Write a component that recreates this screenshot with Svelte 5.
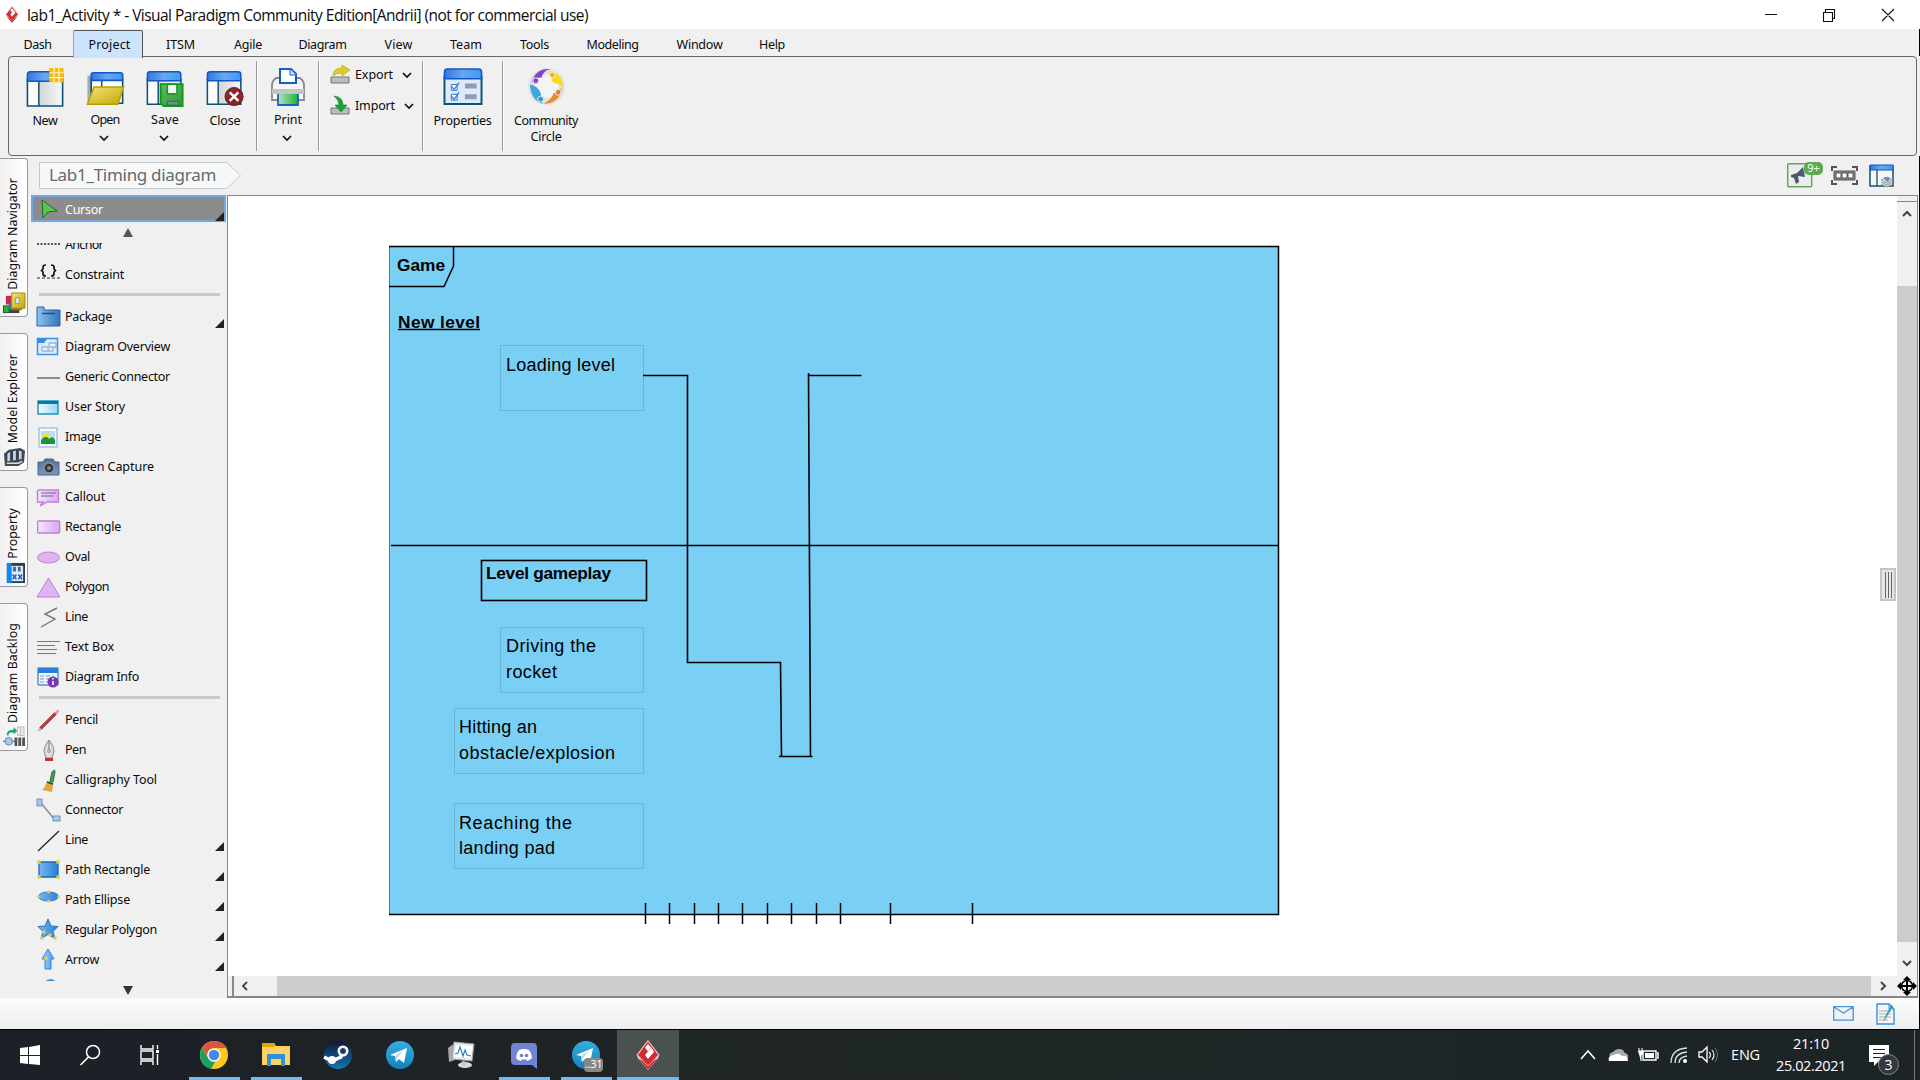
<script>
  // Spreads or tightens the letters so that a label takes the width given in pixels.
  function fit(node, width) {
    const natural = node.getBoundingClientRect().width;
    const count = node.textContent.length;
    if (width && natural) node.style.letterSpacing = (width - natural) / count + 'px';
  }

  const menus = [
    ['Dash', 75, 28], ['Project', 70, 42], ['ITSM', 71, 29], ['Agile', 64, 28],
    ['Diagram', 85, 48], ['View', 67, 28], ['Team', 68, 32], ['Tools', 69, 29],
    ['Modeling', 87, 52], ['Window', 87, 46], ['Help', 58, 26]
  ];

  const win = '<path d="M1 10v28h37V10z" fill="url(#pane)" stroke="#0d5273" stroke-width="1.700"/><path d="M13 11v27" stroke="#0d5273" stroke-width="1.6"/><path d="M1 12V5q0-3 3-3h31q3 0 3 3v7z" fill="url(#bar)" stroke="#1257c4" stroke-width="1.6"/>';

  const art = {
    new: win + '<path d="M24-2h15v15H24z" fill="#f8b90d"/><path d="M24 3h15M24 8h15M29-2v15M34-2v15" stroke="#fff3c4" stroke-width="1.3"/>',
    open: '<path d="M1 6h5v28H1z" fill="#aaa"/><path d="M5 9h33v26H5z" fill="#fff" stroke="#0d5273" stroke-width="1.700"/><path d="M16 10v12" stroke="#0d5273" stroke-width="1.6"/><path d="M5 11V5q0-2 2-2h29q2 0 2 2v6z" fill="url(#bar)" stroke="#1257c4" stroke-width="1.6"/><path d="M8 18h31l-6 18H1z" fill="url(#gold)" stroke="#b3a100" stroke-width="1.6"/>',
    save: '<g transform="scale(.95)">' + win + '</g><path d="M15 15h23v23H18l-3-3z" fill="url(#green)" stroke="#129a1c" stroke-width="2"/><path d="M22 15h10v10H22z" fill="#f0f7f0" stroke="#129a1c" stroke-width="1.5"/><path d="M22 33h12v4H22z" fill="#6a8d9d" stroke="#28752c"/>',
    close: '<g transform="scale(.95)">' + win + '</g><circle cx="29" cy="28" r="9.5" fill="#8a252a" stroke="#5c1b1f"/><path d="m24.500 23.500 9 9m0-9-9 9" stroke="#fff" stroke-width="2.600"/>',
    print: '<path d="M6 10h24q4 3 4 7v15H2V17q0-4 4-7z" fill="url(#metal)" stroke="#888" stroke-width="1.8"/><path d="M2 21h32v5H2z" fill="#c4c4c4"/><path d="M10 15V1h11l5 5v9z" fill="#fff" stroke="#155bd0" stroke-width="2"/><path d="M20 1v6h6" fill="#cbe3ff" stroke="#155bd0"/><path d="M8 26h20v11H8z" fill="url(#print)"/><path d="M8 26v11h20V26" fill="none" stroke="#1c5fc8" stroke-width="1.8"/>',
    properties: '<path d="M1 10v28h38V10z" fill="#dceaf9" stroke="#0d5273" stroke-width="2"/><path d="M1 12V5q0-3 3-3h32q3 0 3 3v7z" fill="url(#bar)" stroke="#1257c4" stroke-width="1.6"/><path d="M8 18h6v6H8zM8 28h6v6H8z" fill="#fff" stroke="#3d70bf"/><path d="m8 20 3 3 5-7M8 30l3 3 5-7" fill="none" stroke="#3d83cf" stroke-width="1.5"/><path d="M22 17h12v5H22zM22 28h12v5H22z" fill="#919bb4"/>',
    circle: '<circle cx="20" cy="20" r="19" fill="#e2e2e2"/><circle cx="20" cy="20" r="12" fill="#f4f4f4"/><path d="M5 15Q9 1 24 2q-8 2-9 9-5-1-7 6z" fill="#8045c8"/><path d="M23 4q13 2 14 17-4-5-8-4-5-2-3-8z" fill="#f8db13"/><path d="M36 21q-2 16-19 17 9-5 10-11 5 0 9-6z" fill="#ed8c25"/><path d="M3 18q8 1 11 9l2 11Q4 34 3 18z" fill="#3ca8df"/><g stroke="#f2f2f2"><circle cx="9" cy="14" r="3" fill="#8045c8"/><circle cx="26" cy="8" r="3" fill="#f0b719"/><circle cx="32" cy="26" r="3" fill="#df7f2c"/><circle cx="14" cy="33" r="3" fill="#239cdf"/></g>',
    export: '<path d="M1 12h18v6H1z" fill="#bbb" stroke="#777"/><path d="M3 11q0-8 9-8V0l8 5-8 6V8q-6 0-9 3z" fill="#dfca28" stroke="#aea018" stroke-width=".6"/>',
    import: '<path d="M1 12h18v6H1z" fill="#bbb" stroke="#777"/><path d="M4 0q9 1 9 9h4l-6 7-6-7h4Q9 4 4 0z" fill="#18a431" stroke="#11832a" stroke-width=".6"/>',

    cursor: '<path d="m5 2 15 11-9 1-5 6z" fill="#55c94f" stroke="#2b5e31"/>',
    anchor: '<path d="M0 10h23" stroke="#222" stroke-width="1.4" stroke-dasharray="2 1.500"/>',
    constraint: '<path d="M9 1q-3 0-3 2v2L4.500 6.500 6 8v2q0 2 3 2M14 1q3 0 3 2v2l1.500 1.500L17 8v2q0 2-3 2" fill="none" stroke="#111" stroke-width="1.700"/><path d="M0 14h23" stroke="#222" stroke-dasharray="3 2"/>',
    package: '<path d="M0 3V1h7v3h16v16H0z" fill="url(#blue)" stroke="#2862aa"/><path d="M5 7.500h13" stroke="#244a78" stroke-width="1.400"/>',
    overview: '<path d="M.5 2.500h20v16H.5z" fill="#dcebfa" stroke="#3693e9" stroke-width="1.500"/><path d="M1 3h9L7 7H1z" fill="#2b91f0"/><path d="M12 7h7v4h-7zM5 11h6v4H5zM11 15h5v-4" fill="#eef4fc" stroke="#7ba0c8"/>',
    generic: '<path d="M0 12h23" stroke="#747474" stroke-width="1.600"/>',
    story: '<path d="M1 5h20v13H1z" fill="url(#sky)" stroke="#1792ba" stroke-width="1.400"/><path d="M1 5h20v3H1z" fill="#087c9c"/>',
    image: '<path d="M2 2h18v19H2z" fill="#f4faff" stroke="#84abd2"/><path d="M4 5h14v13H4z" fill="#bddcf8"/><circle cx="9" cy="10" r="3" fill="#f5e90b"/><path d="M4 18v-4q5-6 8-1 4-4 6 1v4z" fill="#219232"/>',
    camera: '<path d="M1 6h5l2-3h8l2 3h4v13H1z" fill="url(#steel)" stroke="#496484"/><circle cx="12" cy="12" r="5" fill="#333" stroke="#8790a0" stroke-width="1.500"/><circle cx="12" cy="12" r="2" fill="#888"/>',
    callout: '<path d="M1.500 4h20v12H10l-7 4 3-4H.5V5z" fill="url(#pink)" stroke="#c67bdb" stroke-width="1.400"/><path d="M4 7h15M4 10h12" stroke="#74697c"/>',
    rect: '<rect x=".7" y="5" width="22" height="12" rx="1" fill="url(#pink)" stroke="#c67bdb" stroke-width="1.300"/>',
    oval: '<ellipse cx="11.500" cy="11.500" rx="11" ry="5.500" fill="#dfb4ee" stroke="#c67bdb"/>',
    polygon: '<path d="M11.500 2 23 21H0z" fill="#dcb6f4" stroke="#c67bdb"/>',
    zig: '<path d="M20 2 8 8l10 5-14 8" fill="none" stroke="#777" stroke-width="1.400"/>',
    textbox: '<path d="M0 5.500h23M0 9.500h18M0 13.500h20M0 17.500h19" stroke="#777"/>',
    info: '<path d="M1 2h20v17H1z" fill="#eef6ff" stroke="#245e9d"/><path d="M1 2h20v5H1z" fill="#2580de"/><path d="M3 10h14M3 13h14M3 16h12" stroke="#7b96b8" stroke-dasharray="4 2"/><circle cx="16" cy="16" r="5.500" fill="#7838b5"/><path d="M16 15v4M16 12v1.500" stroke="#fff" stroke-width="1.600"/>',
    pencil: '<path d="m2.500 18.500 15-15 2 2-15 15z" fill="#c03a3d" stroke="#92393c" stroke-width=".6"/><path d="m17.500 3.500 3-3 2 2-3 3z" fill="#ea9a9a"/><path d="m1 22 1.500-3.500 2 2z" fill="#e7c99a" stroke="#a98" stroke-width=".5"/>',
    pen: '<path d="M12 1Q7 7 7 12l2 7h6l2-7q0-5-5-11z" fill="#ddd" stroke="#888"/><path d="M12 2v10" stroke="#777"/><circle cx="12" cy="12" r="1.300" fill="#fff" stroke="#888"/><path d="M8 19h8v3H8z" fill="#bc353e"/>',
    brush: '<path d="m13 12 2-9q3-4 3 0l-2 10z" fill="#4b9b59" stroke="#28723a"/><path d="m9 14 7 2-1 7-10-2q3-2 4-7z" fill="#e6a439"/><path d="m10 13 6 2" stroke="#176126" stroke-width="2"/>',
    connector: '<path d="m4 4 14 17" stroke="#888" stroke-width="1.400"/><path d="M0 0h5v7H0zM16 17h7v5h-7z" fill="#a9c8ee" stroke="#6f8fb4"/>',
    line: '<path d="M1 22 22 2" stroke="#222" stroke-width="1.300"/>',
    prect: '<path d="M2 3h19v15H2z" fill="url(#bright)" stroke="#1769bb" stroke-width="1.300"/><g fill="#e0cd4c"><circle cx="2" cy="3" r="1.900"/><circle cx="21" cy="3" r="1.900"/><circle cx="2" cy="18" r="1.900"/><circle cx="21" cy="18" r="1.900"/></g>',
    pellipse: '<ellipse cx="11.500" cy="7.500" rx="10" ry="4.500" fill="url(#bright)" stroke="#3a79ad"/><g fill="#e0cd4c"><circle cx="1.500" cy="7.500" r="1.500"/><circle cx="21.500" cy="7.500" r="1.500"/><circle cx="11.500" cy="3" r="1.500"/><circle cx="11.500" cy="12" r="1.500"/></g>',
    star: '<path d="m11 0 3 7 7 .5-5 5 2 7-7-4-7 4 2-7-5-5 7-.5z" fill="url(#bright)" stroke="#2878c0"/><g fill="#e0cd4c"><circle cx="7" cy="13" r="1.800"/><circle cx="5" cy="19" r="1.800"/><circle cx="13" cy="16" r="1.800"/><circle cx="18" cy="19" r="1.800"/></g>',
    arrow: '<path d="m11 0 6 10h-3v10H8V10H5z" fill="url(#sky2)" stroke="#2588e0"/><circle cx="9" cy="9.500" r="2" fill="#e0cd4c"/>',
    hidden: '<ellipse cx="13.500" cy="7.500" rx="7" ry="7.500" fill="#3a91df"/>',

    vp: '<path d="m12 0 11.500 15-2 4L12 30 2.500 19l-2-4z" fill="#f3d5d5"/><path d="m2.500 18.500 9.500 11 9.500-11-9.500 5z" fill="#c8252d"/><path d="m12 1 10.500 14L12 26 1.500 15z" fill="#d2292f" stroke="#f6cccc" stroke-width=".8"/><path d="M9 7.500 12 4l3 3.500-3 4zM12 11.500l3.500-4L18 12l-6 7-3-4z" fill="#fff"/>',
    start: '<path d="m0 3 8-1v8H0zM9 2l11-2v10H9zM0 11h8v8l-8-1zM9 11h11v9L9 19z" fill="#fff"/>',
    search: '<circle cx="13" cy="7" r="6.500" fill="none" stroke="#fff" stroke-width="1.500"/><path d="m8.500 12-8 8" stroke="#fff" stroke-width="1.600"/>',
    tasks: '<path d="M1 0v4h12V0M1 20v-4h12v4M1 6h12v8H1zM17.500 0v4M17.500 9v11" fill="none" stroke="#fff" stroke-width="1.400"/><path d="M16 5h3v3h-3z" fill="#fff"/>',
    chrome: '<circle cx="14" cy="14" r="14" fill="#fdc91c"/><path d="M2 7Q7 0 14 0q9 0 13 7H14q-6 0-7 7z" fill="#de5347"/><path d="M2 7 9 18q2 3 6 3l-4 7Q0 25 0 14q0-4 2-7z" fill="#1ba260"/><circle cx="14" cy="14" r="6.600" fill="#fff"/><circle cx="14" cy="14" r="5.300" fill="#4688f1"/>',
    folder: '<path d="M0 2h12l2 3h14v19H0z" fill="#fdd262"/><path d="M0 2h11l2 3-2 1H0z" fill="#e6a100"/><path d="M5 25V13h18v12h-4v-7H9v7z" fill="#2f91da"/>',
    steam: '<circle cx="14" cy="14" r="14" fill="url(#steam)"/><path d="m0 16 8 4 9-4 2-7" fill="none" stroke="#fff" stroke-width="3.500"/><circle cx="8" cy="19" r="4" fill="#fff"/><circle cx="19" cy="10" r="5.500" fill="#fff"/><circle cx="19" cy="10" r="3.500" fill="#123a6a" stroke="#fff"/>',
    telegram: '<circle cx="14" cy="14" r="14" fill="url(#tele)"/><path d="m4 14 17-7-3 15-5-4-3 3-1-6z" fill="#fff"/><path d="m9 15 9-6-7 8-1 4z" fill="#b8d6e8"/>',
    monitor: '<path d="m0 7 7-5v17l-6 2z" fill="#aaa"/><path d="m6 1 20 2-2 17-20-2z" fill="#e6e9eb" stroke="#9b9fa2"/><path d="m8 4 16 1-1 12-17-1z" fill="#fff"/><path d="m7 13 3-1 2-6 3 9 2-6 2 5 4 1" fill="none" stroke="#2786b3" stroke-width="1.200"/><ellipse cx="17" cy="24" rx="7" ry="3" fill="#ddd"/><path d="m14 20 5 1-1 4h-5z" fill="#ccc"/>',
    discord: '<path d="M5 2h18q4 0 4 4v22l-5-4H5q-4 0-4-4V6q0-4 4-4z" fill="#7183d2"/><path d="M9 9q5-2 10 0 3 4 3 8-3 3-5 3l-1-2q-2 1-4 0l-1 2q-3 0-5-3 0-4 3-8z" fill="#fff"/><circle cx="11.500" cy="14.500" r="1.800" fill="#7183d2"/><circle cx="16.500" cy="14.500" r="1.800" fill="#7183d2"/>',

    nav: '<path d="M0 14h17v8H0z" fill="#444"/><path d="M1 15h5v6H1z" fill="#16bd2f"/><path d="M3 4h7v9H3z" fill="#d22352"/><path d="M6 11h6v7H6z" fill="#2178c4"/><path d="M8 8h12v11H8z" fill="#8c7a18"/><path d="M9 1h14v16H9z" fill="url(#gold)" stroke="#a28a0c"/><path d="M13 6h4v6h-4z" fill="#dde4f2" stroke="#7d88a4" stroke-width=".8"/>',
    model: '<path d="M1 8 6 4l12-2 5 3-1 12-6 4H2z" fill="#454b53"/><path d="m4 8 4-3v11l-4 1zM10 5l4-1v11l-4 1zM16 4l4 1v9l-4 1z" fill="#c6d5e4" stroke="#263444"/><path d="M4 18h12l4-2" fill="none" stroke="#ddd" stroke-width="1.500"/>',
    prop: '<path d="M4 1h19v21H4z" fill="#303d4d"/><path d="M4 1h5v21H4z" fill="#0a8af4"/><path d="M9 4h12v16H9z" fill="#dcecff"/><path d="M12 5v5m5-5v5" stroke="#54677d" stroke-width="3"/><path d="m10 13 4 5m0-5-4 5m6-5 4 5m0-5-4 5" stroke="#1b60bd" stroke-width="1.500"/>',
    backlog: '<path d="M4 10Q3 4 11 4V1l4 4-4 4V7q-6-1-5 3z" fill="#26a382"/><circle cx="6" cy="16" r="4" fill="#a5c6ec" stroke="#5687bc"/><path d="M0 16h2M10 16h3" stroke="#555"/><path d="M15 1h7v9h-7zM18.500 1v9" fill="#eee" stroke="#bbb"/><path d="M12 12h3v9h-3zM16 12h3v9h-3zM20 12h3v9h-3z" fill="#555"/>'
  };

  const files = [['new', 'New', 25, false], ['open', 'Open', 29, true], ['save', 'Save', 28, true], ['close', 'Close', 31, false]];

  const tools = [
    ['anchor', 'Anchor', 38], ['constraint', 'Constraint', 59], null,
    ['package', 'Package', 47, 1], ['overview', 'Diagram Overview', 105], ['generic', 'Generic Connector', 105],
    ['story', 'User Story', 60], ['image', 'Image', 36], ['camera', 'Screen Capture', 89], ['callout', 'Callout', 40],
    ['rect', 'Rectangle', 56], ['oval', 'Oval', 25], ['polygon', 'Polygon', 44], ['zig', 'Line', 23],
    ['textbox', 'Text Box', 49], ['info', 'Diagram Info', 74], null,
    ['pencil', 'Pencil', 33], ['pen', 'Pen', 21], ['brush', 'Calligraphy Tool', 92], ['connector', 'Connector', 58],
    ['line', 'Line', 23, 1], ['prect', 'Path Rectangle', 85, 1], ['pellipse', 'Path Ellipse', 65, 1],
    ['star', 'Regular Polygon', 92, 1], ['arrow', 'Arrow', 34, 1], ['hidden', '', 0]
  ];

  const sideTabs = [
    ['Diagram Navigator', 106, 'nav', 'navigator'], ['Model Explorer', 85, 'model', 'explorer'],
    ['Property', 48, 'prop', 'property'], ['Diagram Backlog', 96, 'backlog', 'backlog']
  ];

  const ticks = [645.5, 669.5, 694.5, 718.5, 742.5, 767.5, 791.5, 816.5, 840.5, 890.5, 972.5];
  const states = [
    [500.5, 345.5, 143], [500.5, 627.5, 143], [454.5, 708.5, 189], [454.5, 803.5, 189]
  ];
  const labels = [
    ['Loading level', 506, 371, 109], ['Driving the', 506, 652, 90], ['rocket', 506, 678, 51],
    ['Hitting an', 459, 733, 78], ['obstacle/explosion', 459, 759, 156],
    ['Reaching the', 459, 829, 113], ['landing pad', 459, 854, 96]
  ];

  const apps = [
    ['chrome', 'run'], ['folder', 'run'], ['steam', ''], ['telegram', ''], ['monitor', ''],
    ['discord', 'run'], ['telegram', 'run', '..31'], ['vp', 'run active']
  ];
</script>

{#snippet icon(name, w, h, box)}
  <svg class="icon" width={w} height={h} viewBox={box ?? `0 0 ${w} ${h}`}>{@html art[name]}</svg>
{/snippet}

{#snippet down()}
  <svg class="icon down" width="10" height="6" viewBox="0 0 10 6"><path d="m1 1 4 4 4-4" fill="none" stroke="#111" stroke-width="1.7" /></svg>
{/snippet}

<svg class="defs" width="0" height="0">
  <defs>
    <linearGradient id="bar"><stop stop-color="#2f78e0" /><stop offset=".5" stop-color="#69a7ef" /><stop offset="1" stop-color="#3b9af5" /></linearGradient>
    <linearGradient id="pane"><stop stop-color="#fff" /><stop offset=".3" stop-color="#f8f8f8" /><stop offset=".32" stop-color="#d5d5d5" /><stop offset="1" stop-color="#f7f7f7" /></linearGradient>
    <linearGradient id="gold" x2="1" y2="1"><stop stop-color="#f0e27a" /><stop offset="1" stop-color="#c7a800" /></linearGradient>
    <linearGradient id="green" x2="1" y2="1"><stop stop-color="#62b862" /><stop offset="1" stop-color="#2d9939" /></linearGradient>
    <linearGradient id="metal" y2="1" x2="0"><stop stop-color="#eee" /><stop offset="1" stop-color="#fff" /></linearGradient>
    <linearGradient id="print"><stop stop-color="#b8dfc5" /><stop offset="1" stop-color="#1bb52c" /></linearGradient>
    <linearGradient id="blue"><stop stop-color="#8fc0ec" /><stop offset="1" stop-color="#3275bd" /></linearGradient>
    <linearGradient id="bright"><stop stop-color="#79b8f0" /><stop offset="1" stop-color="#2680db" /></linearGradient>
    <linearGradient id="sky"><stop stop-color="#f1fbff" /><stop offset="1" stop-color="#9ad7f1" /></linearGradient>
    <linearGradient id="sky2"><stop stop-color="#a9d2f5" /><stop offset="1" stop-color="#4a9ce6" /></linearGradient>
    <linearGradient id="steel" x2="0" y2="1"><stop stop-color="#58728f" /><stop offset="1" stop-color="#7899c4" /></linearGradient>
    <linearGradient id="pink"><stop stop-color="#f5e7fb" /><stop offset="1" stop-color="#d9a9ec" /></linearGradient>
    <linearGradient id="steam" x2="0" y2="1"><stop stop-color="#101638" /><stop offset="1" stop-color="#1479ad" /></linearGradient>
    <linearGradient id="tele" x2="0" y2="1"><stop stop-color="#35ade1" /><stop offset="1" stop-color="#1683bb" /></linearGradient>
  </defs>
</svg>

<div class="screen">
  <header class="title">
    {@render icon('vp', 14, 17, '0 0 24 30')}
    <span class="caption"><span use:fit={561}>lab1_Activity * - Visual Paradigm Community Edition[Andrii] (not for commercial use)</span></span>
    <svg class="icon controls" width="132" height="14" viewBox="0 0 132 14">
      <path d="M1 6.500h12M59.500 4.500h9v9h-9zM61.500 4V1.500h9v9H69M118 1l12 12m0-12-12 12" fill="none" stroke="#111" stroke-width="1.1" />
    </svg>
  </header>

  <nav class="menu">
    {#each menus as [name, w, tw], i}
      <div class="item" class:active={i === 1} style:width="{w}px"><span use:fit={tw}>{name}</span></div>
    {/each}
  </nav>

  <section class="ribbon">
    {#each files as [art, name, w, more]}
      <div class="big" class:plain={!more}>{@render icon(art, 39, 39, '0 -2 40 41')}<span use:fit={w}>{name}</span>{#if more}{@render down()}{/if}</div>
    {/each}
    <i class="rule"></i>
    <div class="big printer">{@render icon('print', 36, 39)}<span use:fit={28}>Print</span>{@render down()}</div>
    <i class="rule"></i>
    <div class="pair">
      <div class="small">{@render icon('export', 20, 19)}<span use:fit={38}>Export</span>{@render down()}</div>
      <div class="small">{@render icon('import', 20, 19)}<span use:fit={40}>Import</span>{@render down()}</div>
    </div>
    <i class="rule"></i>
    <div class="big plain wide">{@render icon('properties', 40, 39, '0 0 40 40')}<span use:fit={58}>Properties</span></div>
    <i class="rule"></i>
    <div class="big plain community">{@render icon('circle', 39, 39, '0 0 40 40')}<span use:fit={64}>Community</span><span use:fit={31}>Circle</span></div>
  </section>

  <main class="work">
    <aside class="side">
      {#each sideTabs as [name, w, art, kind]}
        <div class="tab {kind}"><span class="turn" style:height="{w}px"><span>{name}</span></span>{@render icon(art, 23, 22, '0 0 24 23')}</div>
      {/each}
    </aside>

    <div class="body">
      <div class="crumbs">
        <div class="crumb">
          <svg class="shape" width="203" height="28" viewBox="0 0 203 28"><path d="M.5.500h187l14 13-14 13H.5z" fill="#f7f9f9" stroke="#c5c8ca" /></svg>
          <span class="here"><span use:fit={167}>Lab1_Timing diagram</span></span>
        </div>
        <div class="extras">
          <div class="news">
            <svg class="icon" width="26" height="25" viewBox="0 0 26 25"><rect x=".7" y=".7" width="24" height="23" rx="1" fill="#ececec" stroke="#65a45e" stroke-width="1.4" /><path d="m4 12 6-2 6-6 2 10-7-1 1 6-3 2-2-6-3-1z" fill="#4b596c" /></svg>
            <b class="count">9+</b>
          </div>
          <svg class="icon" width="27" height="19" viewBox="0 0 27 19"><path d="M1 5V1h5M21 1h5v4M26 14v4h-5M6 18H1v-4" fill="none" stroke="#555" stroke-width="2" /><path d="M3 5h21v9H3z" fill="#888" stroke="#555" /><path d="M5 7h5v5H5zM11 7h5v5h-5zM17 7h5v5h-5z" fill="#fff" stroke="#555" /></svg>
          <svg class="icon last" width="25" height="24" viewBox="0 0 25 24"><path d="M1 2h23v20H1z" fill="#f6f6f6" stroke="#0d5273" stroke-width="1.5" /><path d="M8 6v16" stroke="#0d5273" stroke-width="1.3" /><path d="M1 1h23v5H1z" fill="url(#bar)" stroke="#1257c4" /><path d="m12 16 6-3 6 3-6 3zM12 18l6 3 6-3M12 20l6 3 6-3" fill="#ddd" stroke="#999" /><path d="m15 13 6 1-2 4-3-2z" fill="#568ed0" /></svg>
        </div>
      </div>

      <div class="stage">
        <section class="palette">
          <div class="tool chosen">{@render icon('cursor', 23, 23)}<span use:fit={38}>Cursor</span><i class="more"></i></div>
          <div class="scroller"><i class="up"></i></div>
          <div class="list">
            {#each tools as tool, i}
              {#if tool}
                <div class="tool">{@render icon(tool[0], 23, 23)}<span use:fit={tool[2]}>{tool[1]}</span>{#if tool[3]}<i class="more"></i>{/if}</div>
              {:else}
                <div class="split" class:second={i > 5}></div>
              {/if}
            {/each}
          </div>
          <div class="scroller bottom"><i class="dn"></i></div>
        </section>

        <section class="editor">
          <div class="row">
            <div class="canvas">
              <svg class="diagram" width="1669" height="780" viewBox="228 196 1669 780">
                <rect x="389.500" y="246.500" width="889" height="668" fill="#7acff5" />
                <path d="M389.500 246v669" stroke="#447a94" />
                <path d="M389 246.500h889.500v668H389M453.500 246v20l-9.500 20.500h-55M391 545.500h887" fill="none" stroke="#000" stroke-width="1.5" />
                {#each states as [x, y, w]}
                  <rect {x} {y} width={w} height="65" fill="none" stroke="#69b3d6" />
                {/each}
                <rect x="481.500" y="560.500" width="165" height="40" fill="none" stroke="#000" stroke-width="1.6" />
                <path d="M643 375.500h44.500v287h93l1 94M779 756.500h33.500M810.500 756l-2-383M808 375.500h53.500" fill="none" stroke="#000" stroke-width="1.6" />
                {#each ticks as x}
                  <path d="M{x} 903v21" stroke="#000" stroke-width="1.5" />
                {/each}
                <g class="strong">
                  <text x="397" y="271" textLength="48">Game</text>
                  <text x="398" y="328" textLength="82">New level</text>
                  <text x="486" y="578.500" textLength="125">Level gameplay</text>
                </g>
                <path d="M398 329.500h82" stroke="#000" stroke-width="1.3" />
                {#each labels as [name, x, y, w]}
                  <text {x} {y} textLength={w}>{name}</text>
                {/each}
              </svg>
              <div class="handle"><i></i><i></i><i></i></div>
            </div>
            <div class="vbar">
              <i class="cap"></i>
              <svg class="icon" width="10" height="8" viewBox="0 0 10 8"><path d="m1 6 4-4 4 4" fill="none" stroke="#444" stroke-width="2" /></svg>
              <i class="thumb"></i>
              <svg class="icon" width="10" height="8" viewBox="0 0 10 8"><path d="m1 1 4 4 4-4" fill="none" stroke="#444" stroke-width="2" /></svg>
            </div>
          </div>
          <div class="hbar">
            <i class="grip"></i>
            <svg class="icon" width="8" height="10" viewBox="0 0 8 10"><path d="M6 1 2 5l4 4" fill="none" stroke="#444" stroke-width="1.800" /></svg>
            <i class="thumb"></i>
            <svg class="icon" width="8" height="10" viewBox="0 0 8 10"><path d="m2 1 4 4-4 4" fill="none" stroke="#444" stroke-width="2" /></svg>
            <svg class="icon pan" width="20" height="20" viewBox="0 0 20 20"><path d="m10 0 4 4h-3v5h5V6l4 4-4 4v-3h-5v5h3l-4 4-4-4h3v-5H4v3l-4-4 4-4v3h5V4H6z" fill="#000" /><circle cx="10" cy="10" r="5.500" fill="none" stroke="#000" stroke-width="1.500" /></svg>
          </div>
        </section>
      </div>
    </div>
  </main>

  <footer class="status">
    <svg class="icon" width="21" height="15" viewBox="0 0 21 15"><path d="M.7.700h19.500v13.500H.7zM1 1l9.500 6L20 1" fill="#eef1f4" stroke="#4a91d8" stroke-width="1.300" /></svg>
    <svg class="icon" width="19" height="22" viewBox="0 0 19 22"><path d="M1 1h12l5 5v15H1z" fill="#f3f6f8" stroke="#3c8ddd" stroke-width="1.400" /><path d="M13 1v5h5" fill="none" stroke="#3c8ddd" /><path d="M3 8h12M3 11h12M3 14h12M3 17h9" stroke="#aaa" /><path d="m7 19 2-5 6-12 2 1-7 12z" fill="#2a9cb0" /></svg>
  </footer>

  <div class="taskbar">
    <div class="slot sys">{@render icon('start', 20, 20)}</div>
    <div class="slot sys">{@render icon('search', 20, 20)}</div>
    <div class="slot sys">{@render icon('tasks', 20, 20)}</div>
    {#each apps as [art, state, badge]}
      <div class="slot {state}">
        {#if art === 'vp'}{@render icon(art, 26, 30, '-1 0 26 30')}{:else}{@render icon(art, 28, 28)}{/if}
        {#if badge}<span class="badge">{badge}</span>{/if}
      </div>
    {/each}
    <div class="tray">
      <svg class="icon" width="138" height="22" viewBox="0 0 138 22">
        <path d="m1 15 7-8 7 8" fill="none" stroke="#fff" stroke-width="1.500" />
        <path d="M30 14q-2-5 3-6 4-5 10-2 1 2 2 3 4 1 3 5z" fill="#aaa" /><path d="M29 17q-2-5 5-6 4-3 8 1 6-1 6 5z" fill="#fff" />
        <path d="M63 7h13v9H63zM77 9h1v5h-1" fill="none" stroke="#fff" stroke-width="1.400" /><path d="M65 9h9v5h-9z" fill="#fff" /><path d="M59 4v3m3-3v3m-4 0h5v3l-2 1v6" fill="#fff" stroke="#fff" />
        <g fill="none" stroke="#ddd" stroke-width="1.300"><path d="M91 19Q91 5 107 4M95 19q0-10 12-11M99 19q0-6 8-7" /></g><circle cx="105" cy="17" r="2" fill="#fff" />
        <path d="M119 8h3l5-5v15l-5-5h-3z" fill="none" stroke="#fff" stroke-width="1.300" /><path d="M129 8q3 3 0 6M132 6q4 5 0 10" fill="none" stroke="#eee" stroke-width="1.200" /><path d="M135 4q5 7 0 14" fill="none" stroke="#777" />
      </svg>
      <span class="lang"><span use:fit={29}>ENG</span></span>
      <div class="clock"><span use:fit={36}>21:10</span><span use:fit={70}>25.02.2021</span></div>
      <div class="notes">
        <svg class="icon" width="20" height="21" viewBox="0 0 20 21"><path d="M0 0h20v17H9l-4 4v-4H0z" fill="#fff" /><path d="M4 4.500h12M4 8.500h12M4 12.500h8" stroke="#222" /></svg>
        <span class="dot">3</span>
      </div>
      <i class="peek"></i>
    </div>
  </div>
</div>

<style>
  :global(body) { overflow: hidden; }
  .defs { position: absolute; }
  .icon { display: block; flex: none; overflow: visible; }
  .screen { width: 1920px; height: 1080px; display: flex; flex-direction: column; background: #f0f0f0; font: 12px/16px "Noto Sans", sans-serif; color: #0b0b0b; white-space: nowrap; }
  .screen span { display: inline-block; }

  .title { height: 29px; flex: none; display: flex; align-items: center; background: #fff; padding: 0 24px 0 5px; }
  .caption { margin-left: 8px; flex: 1; font: 15.500px/22px "Open Sans", sans-serif; }

  .menu { height: 27px; flex: none; display: flex; border-right: 1px solid #000; box-sizing: border-box; }
  .menu .item { display: flex; justify-content: center; align-items: center; flex: none; height: 27px; padding-top: 4px; box-sizing: border-box; font-size: 12.500px; }
  .menu .active { background: #cce4fb; border: 1px solid #555; border-bottom: 0; border-left-color: #9aa; border-radius: 2px 2px 0 0; height: 28px; z-index: 1; margin: 1px 2px 0 -2px; padding: 1px 0 0 3px; }

  .ribbon { height: 100px; flex: none; box-sizing: border-box; margin: 0 3px 0 8px; border: 1px solid #666; border-radius: 4px; display: flex; padding: 4px 0 0 6px; font-size: 12.500px; }
  .big { width: 60px; display: flex; flex-direction: column; align-items: center; padding-top: 7px; height: 84px; }
  .big .icon:first-child { margin-bottom: 5px; }
  .plain .icon:first-child { margin-bottom: 6px; }
  .big .down { margin-top: 7px; margin-right: 3px; }
  .big + .rule { margin-left: 1px; }
  .big.printer { width: 62px; }
  .big.wide { width: 79px; }
  .wide .icon, .community .icon { margin-top: -1px; padding-bottom: 1px; }
  .big.community { width: 86px; }
  .rule { width: 2px; height: 90px; background: linear-gradient(90deg, #999 50%, #fff 50%); margin-right: -1px; flex: none; }
  .big.printer + .rule, .big.wide + .rule { margin-left: -1px; }
  .big.wide + .rule { margin-left: 0; }
  .pair { width: 103px; display: flex; flex-direction: column; gap: 12px; padding: 4px 0 0 11px; box-sizing: border-box; }
  .small { display: flex; align-items: center; height: 19px; }
  .small span { margin: 0 9px 0 5px; }

  .work { height: 842px; flex: none; display: flex; border-right: 1px solid #000; box-sizing: border-box; }
  .side { width: 31px; flex: none; padding-top: 2px; box-sizing: border-box; }
  .tab { width: 28px; box-sizing: border-box; border: 1px solid #999; border-left: 0; border-radius: 0 4px 4px 0; background: linear-gradient(90deg, #f0f0f0, #fff); display: flex; flex-direction: column; justify-content: flex-end; align-items: flex-end; gap: 5px; padding: 0 1px 2px 0; margin-bottom: 16px; }
  .navigator { height: 159px; }
  .explorer { height: 138px; }
  .property { height: 100px; }
  .backlog { height: 148px; }
  .turn { width: 22px; display: flex !important; align-items: center; justify-content: center; margin-right: 2px; }
  .turn span { writing-mode: vertical-rl; transform: rotate(180deg); font-size: 12.300px; letter-spacing: .1px; }

  .body { flex: 1; display: flex; flex-direction: column; min-width: 0; }
  .crumbs { height: 39px; display: flex; justify-content: space-between; padding: 6px 25px 0 8px; box-sizing: border-box; }
  .crumb { display: grid; }
  .shape, .here { grid-area: 1 / 1; }
  .here { padding-left: 10px; font-size: 17px; line-height: 26px; color: #65696e; }
  .extras { display: flex; align-items: center; height: 26px; }
  .news { position: relative; margin-right: 18px; }
  .count { position: absolute; left: 17px; top: -1px; width: 19px; height: 13px; border-radius: 5px; background: #5aab51; color: #fff; font: 11px/12px "Noto Sans", sans-serif; text-align: center; }
  .last { margin: 2px 0 0 11px; }

  .stage { display: flex; height: 803px; }
  .palette { width: 196px; flex: none; height: 803px; display: flex; flex-direction: column; border-right: 1px solid #888; box-sizing: content-box; }
  .tool { height: 30px; flex: none; display: flex; align-items: center; padding-left: 6px; position: relative; font-size: 12.500px; }
  .tool span { margin-left: 5px; }
  .chosen { height: 27px; box-sizing: border-box; background: #8c8c8c; border: 2px solid #70a8e4; color: #fff; padding: 2px 0 0 4px; margin-right: 1px; }
  .more { position: absolute; right: 3px; bottom: 1px; border-left: 9px solid transparent; border-bottom: 9px solid #222; }
  .list .more { bottom: 4px; }
  .chosen .more { right: 0; bottom: -1px; }
  .scroller { height: 21px; flex: none; display: flex; justify-content: center; align-items: center; padding-right: 2px; }
  .up { border: 5px solid transparent; border-top: 0; border-bottom: 9px solid #555; }
  .dn { border: 5px solid transparent; border-bottom: 0; border-top: 9px solid #333; margin-top: 2px; }
  .bottom { height: 16px; }
  .list { height: 738px; flex: none; overflow: hidden; display: flex; flex-direction: column; justify-content: flex-start; }
  .list .tool:first-child { margin-top: -13px; }
  .split { height: 3px; margin: 3px 7px 6px 8px; flex: none; background: #c9c9c9; }
  .split.second { margin: 4px 7px 6px 8px; }

  .editor { flex: 1; min-width: 0; display: flex; flex-direction: column; border-top: 1px solid #85858d; border-right: 1px solid #85858d; margin-right: 1px; }
  .row { display: flex; height: 780px; }
  .canvas { flex: 1; background: #fff; position: relative; min-width: 0; overflow: hidden; }
  .diagram { display: block; font: 18px "Liberation Sans", sans-serif; }
  .strong { font-weight: 700; font-size: 17.300px; }
  .handle { position: absolute; right: 1px; top: 372px; width: 16px; height: 33px; border: 2px solid #c4c4c4; background: #e6e6e6; box-sizing: border-box; display: flex; justify-content: center; align-items: center; gap: 2px; }
  .handle i { width: 1px; height: 26px; background: #666; }
  .vbar { width: 20px; display: flex; flex-direction: column; align-items: center; background: #f0f0f0; }
  .cap { width: 100%; height: 5px; border-bottom: 1px solid #888; margin-bottom: 8px; }
  .vbar .thumb { width: 100%; height: 656px; background: #cdcdcd; margin: 68px 0 18px; }
  .hbar { display: flex; align-items: center; height: 20px; background: #f0f0f0; border-bottom: 2px solid #85858d; }
  .grip { width: 4px; height: 20px; border-right: 2px solid #888; margin-right: 7px; }
  .hbar .thumb { height: 20px; width: 1596px; background: #cdcdcd; margin: 0 8px 0 28px; }
  .pan { margin-left: 10px; }

  .status { height: 31px; flex: none; box-sizing: border-box; display: flex; align-items: center; justify-content: flex-end; gap: 22px; padding-right: 24px; background: linear-gradient(#fcfcfc, #eceef0); border-right: 1px solid #000; }
  .taskbar { height: 51px; flex: none; box-sizing: border-box; border-top: 1px solid #000; display: flex; background: linear-gradient(90deg, #1c2028, #1f2625 40%, #1d2427); color: #fff; }
  .slot { width: 62.050px; height: 50px; flex: none; display: flex; align-items: center; justify-content: center; position: relative; }
  .slot.sys { width: 60px; }
  .sys:nth-child(3) { margin-right: 3px; }
  .run::after { content: ""; position: absolute; left: 6px; right: 5px; bottom: 0; height: 3px; background: #76b9ed; }
  .slot.active { background: #4a5151; }
  .slot.active::after { left: 0; right: 0; }
  .badge { position: absolute; left: 29px; top: 28px; width: 19px; height: 14px; border-radius: 4px; background: #878787; color: #fff; font-size: 10.500px; line-height: 13px; text-align: center; }
  .tray { flex: 1; display: flex; justify-content: flex-end; align-items: center; font: 14.500px/22px "Open Sans", sans-serif; }
  .lang { margin-left: 13px; width: 29px; }
  .clock { width: 70px; margin-left: 16px; display: flex; flex-direction: column; align-items: center; }
  .notes { position: relative; margin: 0 25px 0 23px; }
  .dot { position: absolute; left: 9px; top: 9px; width: 19px; height: 19px; border: 1px solid #888; border-radius: 50%; background: #33383a; text-align: center; font-size: 14px; line-height: 19px; }
  .peek { width: 1px; height: 50px; background: #777; margin-right: 5px; }
</style>
